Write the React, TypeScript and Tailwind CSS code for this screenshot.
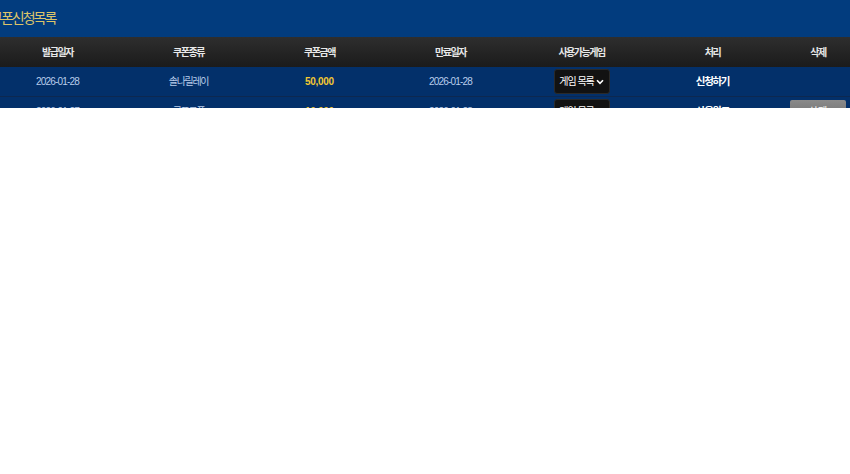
import React from 'react';

type Coupon = {
  issued: string;
  kind: string;
  amount: string;
  expires: string;
  status: string;
  used: boolean;
};

const coupons: Coupon[] = [
  { issued: '2026-01-28', kind: '솔나릴레이', amount: '50,000', expires: '2026-01-28', status: '신청하기', used: false },
  { issued: '2026-01-27', kind: '콤프쿠폰', amount: '10,000', expires: '2026-01-28', status: '사용완료', used: true },
];

// arial-width latin for numbers, CJK for the hangul labels
const font = {
  fontFamily: '"Liberation Sans", "Noto Sans CJK KR", sans-serif',
};

const cols = 'grid grid-cols-[131px_131px_131px_131px_131px_131px_1fr]';

function GameSelect() {
  return (
    <div className="flex items-center justify-center gap-[2px] w-[56px] h-[25px] rounded-[3px] bg-[#121212] border border-[#2a2a2a] text-[10px] tracking-[-1px] text-white">
      <span>게임 목록</span>
      <svg width="8" height="6" viewBox="0 0 8 6" className="mt-[1px]">
        <path d="M1 1.2 L4 4.4 L7 1.2" fill="none" stroke="#fff" strokeWidth="1.6" />
      </svg>
    </div>
  );
}

export default function App() {
  return (
    <div className="w-[850px] h-[474px] bg-white overflow-hidden" style={font}>
      <div className="h-[108px] overflow-hidden bg-[#03306a]">
        <div className="h-[37px] bg-[#023c7e] flex items-center -ml-[10px]">
          <h2 className="text-[14px] leading-none text-[#dcc46a] tracking-[-2px] pb-[1px]">쿠폰신청목록</h2>
        </div>

        <div className="-ml-[8px] w-[866px]">
          <div className={`${cols} h-[30px] items-center bg-gradient-to-b from-[#2e2e2e] to-[#1b1b1b] text-[10px] tracking-[-1.5px] font-bold text-[#e8e8e8]`}>
            <span className="text-center">발급일자</span>
            <span className="text-center">쿠폰종류</span>
            <span className="text-center">쿠폰금액</span>
            <span className="text-center">만료일자</span>
            <span className="text-center">사용가능게임</span>
            <span className="text-center">처리</span>
            <span className="text-center">삭제</span>
          </div>

          {coupons.map((c) => (
            <div
              key={c.issued + c.kind}
              className={`${cols} h-[30px] items-center border-b border-[#0d2850] bg-[#03306a] text-[10px] text-[#b9cdea]`}
            >
              <span className="text-center tracking-[-0.8px]">{c.issued}</span>
              <span className="text-center tracking-[-1.3px]">{c.kind}</span>
              <span className="text-center font-bold tracking-[-0.3px] text-[#f2c832]">{c.amount}</span>
              <span className="text-center tracking-[-0.8px]">{c.expires}</span>
              <div className="flex justify-center">
                <GameSelect />
              </div>
              <span className="text-center text-[10.5px] tracking-[-1.3px] font-bold text-white">{c.status}</span>
              <div className="flex justify-center">
                {c.used && (
                  <button className="w-[56px] h-[24px] rounded-[2px] bg-gradient-to-b from-[#8a8a8a] to-[#6a6a6a] text-[10px] text-white">
                    삭제
                  </button>
                )}
              </div>
            </div>
          ))}
        </div>
      </div>
    </div>
  );
}
